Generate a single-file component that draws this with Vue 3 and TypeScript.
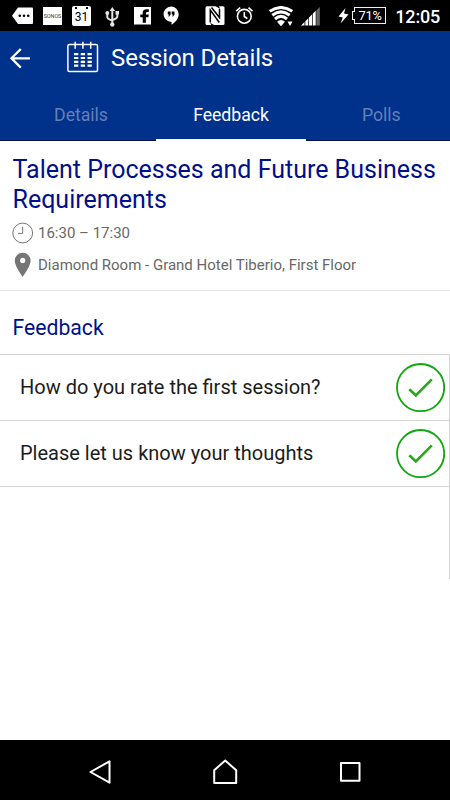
<script setup lang="ts">
interface Question { id: number; label: string }

const tabs: string[] = ['Details', 'Feedback', 'Polls']
const activeTab = 'Feedback'
const questions: Question[] = [
  { id: 1, label: 'How do you rate the first session?' },
  { id: 2, label: 'Please let us know your thoughts' },
]
</script>

<template>
  <div class="screen">
    <div class="status">
      <div class="status-left">
        <svg width="22" height="18" viewBox="12 7 22 18">
          <path d="M18 7.500H32q1 0 1 1V23q0 1-1 1H18l-6-8.200z" fill="#fff" />
          <circle cx="19.800" cy="15.700" r="1.300" /><circle cx="24" cy="15.700" r="1.300" /><circle cx="28.200" cy="15.700" r="1.300" />
        </svg>
        <span class="sonos">SONOS</span>
        <span class="cal-badge">31</span>
        <svg class="usb" width="14" height="20" viewBox="105 6 14 20" fill="none" stroke="#e4e4e4" stroke-width="2">
          <path d="M112.300 8v15M107.300 12v4q0 2 5 3.500M117.300 11.500v4q0 2-5 3.500" />
          <path d="M112.300 6l2.800 4h-5.600z" fill="#e4e4e4" stroke="none" />
          <circle cx="107.300" cy="12" r="2" fill="#e4e4e4" stroke="none" /><path d="M115.500 10h3.500v3.500h-3.500z" fill="#e4e4e4" stroke="none" />
          <circle cx="112.300" cy="23.500" r="2.200" fill="#e4e4e4" stroke="none" />
        </svg>
        <svg class="fb" width="18" height="18" viewBox="0 0 18 18">
          <path d="M0 0h17v17.500H0z" fill="#fff" />
          <path d="M8.700 15.800V10.300H6.300V7.600H8.700V6q0-3.700 3.900-3.700h2.200v2.700h-1.500q-1.400 0-1.400 1.400v1.200h2.900l-.4 2.700H11.900v5.500z" fill="#000" />
        </svg>
        <svg class="hangouts" width="17" height="20" viewBox="0 0 17 20">
          <path d="M8 .5a7.700 7.700 0 0 1 7.700 7.700c0 5-4 8.500-7.200 10.500v-2.800A7.700 7.700 0 1 1 8 .5z" fill="#fff" />
          <path d="M4.800 5.500h2.800V8.500L6.200 10.500H5.300L6 8.500H4.800zM8.700 5.500h2.800V8.500l-1.400 2h-.9l.7-2H8.700z" fill="#000" />
        </svg>
      </div>
      <div class="status-right">
        <svg width="20" height="20" viewBox="0 0 20 20">
          <rect x=".5" y=".3" width="19" height="18.700" rx="1.500" fill="#fff" />
          <path d="M5.300 16.500V4L14.300 16.500M6.500 1.500L14.500 11.500V3" fill="none" stroke="#000" stroke-width="1.500" />
          <path d="M5 16.800L9.500 19.200H6.500zM10.500 0H14L15 3z" fill="#000" />
        </svg>
        <svg class="alarm" width="19" height="19" viewBox="0 0 19 19" fill="none" stroke="#fff" stroke-width="1.600">
          <circle cx="9.300" cy="10.300" r="6.900" /><path d="M9.300 6v4.500l3 2M1.200 5.200l4-3.500M13.500 1.700l4 3.500" />
        </svg>
        <svg class="wifi" width="25" height="21" viewBox="0 0 25 21" fill="none" stroke="#fff">
          <path d="M.7 5.300Q12 -2.300 23.300 5.300M3.300 9.200Q12 2.500 20.700 9.200M6 13Q12 7.800 18 13" stroke-width="3" />
          <path d="M8 15.700Q12 12.300 16 15.700L12 20.300z" fill="#fff" stroke="none" />
          <path d="M18.500 15.500h5l-2.500 4.500z" fill="#fff" stroke="none" />
        </svg>
        <svg class="signal" width="20" height="19" viewBox="0 0 20 19">
          <path d="M0 18.500L3.500 15V18.500zM4.300 18.500V14.200L7.300 11.200V18.500zM8 18.500V10.500L11 7.500V18.500zM11.700 18.500V6.800L14.700 3.800V18.500z" fill="#fff" />
          <path d="M15.300 3.500L18.800 0V18.500H15.300z" fill="#666" />
        </svg>
        <svg class="bolt" width="11" height="16" viewBox="0 0 11 16"><path d="M7.500 0L.5 8.500 4.800 9.500 2.500 15.500 10.500 6.500 6 5.500z" fill="#fff" /></svg>
        <span class="battery"><i class="battery-tip"></i>71%</span>
        <span class="time">12:05</span>
      </div>
    </div>

    <header class="header">
      <div class="bar">
        <svg width="22" height="22" viewBox="0 0 22 22" fill="none" stroke="#fff" stroke-width="2.300">
          <path d="M11.800 2L2.500 11.300l9.300 9.300M2.500 11.300H21" />
        </svg>
        <svg class="cal-icon" width="34" height="33" viewBox="0 0 34 33">
          <rect x="1.900" y="3.600" width="29.600" height="26.900" rx="1.500" fill="none" stroke="#fff" stroke-width="1.500" />
          <path d="M9.200 .8v7M16.900 .8v7M24.700 .8v7" stroke="#fff" stroke-width="1.500" />
          <path d="M8 13.200H25.800M8 17H25.800M8 20.800H25.800M8 24.600H25.800" stroke="#fff" stroke-width="2.200" stroke-dasharray="4.300 2.450" />
        </svg>
        <h1 class="title">Session Details</h1>
      </div>
      <nav class="tabs">
        <div v-for="tab in tabs" :key="tab" class="tab" :class="{ active: tab === activeTab }">{{ tab }}</div>
      </nav>
    </header>

    <section class="summary">
      <h2 class="name">Talent Processes and Future Business Requirements</h2>
      <div class="meta">
        <svg width="22" height="22" viewBox="0 0 22 22" fill="none" stroke="#777">
          <circle cx="10.700" cy="11" r="9.900" /><path d="M10.700 4.800v6.600H6" />
        </svg>
        <span class="when">16:30 – 17:30</span>
      </div>
      <div class="meta place">
        <svg width="22" height="26" viewBox="0 0 22 26">
          <path fill="#757575" fill-rule="evenodd" d="M10.700 .8a7.900 7.900 0 0 0-7.900 7.900C2.800 14.300 10.700 24.800 10.700 24.800s7.900-10.500 7.900-16.100A7.900 7.900 0 0 0 10.700 .8zm0 5a2.600 2.600 0 1 1 0 5.200 2.600 2.600 0 0 1 0-5.200z" />
        </svg>
        <span class="where">Diamond Room - Grand Hotel Tiberio, First Floor</span>
      </div>
    </section>

    <h3 class="section-title">Feedback</h3>
    <div class="list">
      <div v-for="q in questions" :key="q.id" class="row">
        <span class="label">{{ q.label }}</span>
        <svg width="50" height="50" viewBox="0 0 50 50" fill="none">
          <circle cx="25.600" cy="24.600" r="23.600" stroke="#10a80c" stroke-width="1.800" />
          <path d="M14.300 26.200l6.500 6.200L36.800 16.400" stroke="#29a71c" stroke-width="2.600" />
        </svg>
      </div>
    </div>

    <footer class="nav">
      <svg width="24" height="26" viewBox="0 0 24 26"><path d="M2.500 13L21.500 2.300V23.700z" fill="none" stroke="#fff" stroke-width="2" stroke-linejoin="round" /></svg>
      <svg width="26" height="26" viewBox="0 0 26 26"><path d="M1.200 24V11.300L12.200 1.500 23.200 11.300V24z" fill="none" stroke="#fff" stroke-width="2" stroke-linejoin="round" /></svg>
      <svg width="22" height="22" viewBox="0 0 22 22"><rect x="2" y="2" width="18.500" height="17.800" fill="none" stroke="#fff" stroke-width="2" stroke-linejoin="round" /></svg>
    </footer>
  </div>
</template>

<style>
body { margin: 0; }
</style>

<style scoped>
* { box-sizing: border-box; }
svg { display: block; flex: none; }
h1, h2, h3 { margin: 0; font-weight: 400; }
.screen { width: 450px; height: 800px; display: flex; flex-direction: column; background: #fff; font-family: Roboto, sans-serif; overflow: hidden; white-space: nowrap; }
.status { height: 31px; flex: none; background: #000; color: #fff; display: flex; justify-content: space-between; padding: 6px 10px 0 12px; }
.status-left, .status-right { display: flex; align-items: flex-start; }
.status-left { gap: 11px; }
.status-left svg { margin-top: 1px; }
.status-left .usb { margin-left: 2px; }
.status-left .fb { margin-left: 4px; }
.status-left .hangouts { margin: 0; }
.sonos { width: 19px; height: 18px; margin: 1px -1px 0 -2px; background: #fff; color: #333; font-size: 5.400px; line-height: 18px; text-align: center; }
.cal-badge { width: 19px; height: 20px; margin-right: 1px; background: radial-gradient(circle at 4px 2px, #000 1px, transparent 1.500px), radial-gradient(circle at 15px 2px, #000 1px, transparent 1.500px), #fff; border-radius: 2px; color: #000; font-size: 12px; line-height: 22px; text-align: center; }
.alarm { margin-left: 10px; }
.wifi { margin-left: 15px; }
.signal { margin: 1px 0 0 7px; }
.bolt { margin: 2px 0 0 17px; }
.battery { position: relative; width: 32px; height: 17px; margin: 1px 0 0 5px; border: 1px solid #eee; font-size: 12.800px; line-height: 15px; text-align: center; letter-spacing: -.2px; }
.battery-tip { position: absolute; left: -3px; top: 3px; width: 3px; height: 9px; background: #000; border: 1px solid #eee; border-right: 0; }
.time { margin-left: 9px; width: 45px; font-size: 18px; font-weight: 500; line-height: 22px; text-align: right; letter-spacing: -.2px; }
.header { height: 110px; flex: none; background: #00318b; color: #fff; display: flex; flex-direction: column; justify-content: space-between; border-bottom: 1px solid #00104f; }
.bar { height: 54px; padding-left: 9px; display: flex; align-items: center; }
.cal-icon { margin: -2px 11px 0 35px; }
.title { font-size: 24px; line-height: 30px; letter-spacing: -.120px; }
.tabs { display: grid; grid-template-columns: 150px 150px 144px; margin: 0 0 -1px 6px; }
.tab { height: 53px; padding-top: 1px; line-height: 52px; text-align: center; font-size: 17.700px; letter-spacing: -.050px; color: #6380b7; }
.tab:last-child { text-align: left; text-indent: 56px; }
.tab.active { color: #fff; border-bottom: 2px solid #fff; }
.summary { height: 150px; flex: none; padding: 14px 12px 0; border-bottom: 1px solid #e4e4e4; }
.name { padding-left: .5px; margin-right: -6px; color: #00108a; font-size: 25px; line-height: 30px; white-space: normal; }
.meta { display: flex; align-items: center; gap: 4px; height: 22px; margin-top: 7px; color: #686868; font-size: 15px; }
.place { height: 26px; margin-top: 8px; }
.section-title { height: 63px; flex: none; padding: 23px 12.500px 0; color: #00108a; font-size: 21.200px; line-height: 28px; }
.list { height: 225px; flex: none; border-top: 1px solid #d4d4d4; border-right: 1px solid #d4d4d4; }
.row { height: 66px; padding: 0 4px 0 20px; display: flex; align-items: center; justify-content: space-between; border-bottom: 1px solid #d4d4d4; color: #1c1c1c; font-size: 20px; }
.label { padding-bottom: 2px; }
.nav { height: 60px; margin-top: auto; padding: 3px 89px 0 88px; background: #000; display: flex; align-items: center; justify-content: space-between; }
</style>
